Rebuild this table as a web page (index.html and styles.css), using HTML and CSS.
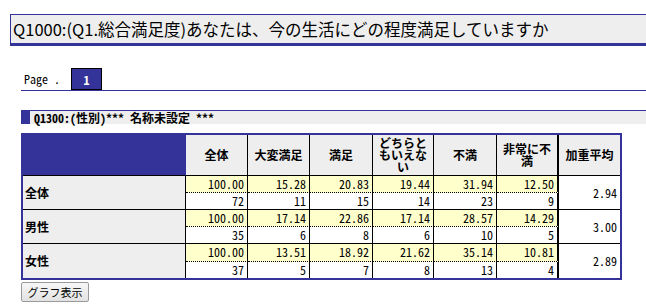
FILE: index.html
```html
<!DOCTYPE html>
<html lang="ja">
<head>
<meta charset="utf-8">
<title>Q1000</title>
<link rel="stylesheet" href="styles.css">
</head>
<body>
<div class="title">Q1000:(Q1.総合満足度)あなたは、今の生活にどの程度満足していますか</div>

<div class="pager">
  <span class="page-label">Page .</span>
  <span class="page-num">1</span>
</div>

<div class="sub">
  <span class="sub-mark"></span>
  <span class="sub-text">Q1300:(性別)*** 名称未設定 ***</span>
</div>

<table class="cross">
  <tr class="head">
    <th class="corner"></th>
    <th class="c1">全体</th>
    <th class="c2">大変満足</th>
    <th class="c3">満足</th>
    <th class="c4">どちらともいえない</th>
    <th class="c5">不満</th>
    <th class="c6 sep">非常に不満</th>
    <th class="c7 last">加重平均</th>
  </tr>
  <tr class="pct">
    <th class="label" rowspan="2">全体</th>
    <td>100.00</td><td>15.28</td><td>20.83</td><td>19.44</td><td>31.94</td><td class="sep">12.50</td>
    <td class="avg last" rowspan="2">2.94</td>
  </tr>
  <tr class="cnt">
    <td>72</td><td>11</td><td>15</td><td>14</td><td>23</td><td class="sep">9</td>
  </tr>
  <tr class="pct">
    <th class="label" rowspan="2">男性</th>
    <td>100.00</td><td>17.14</td><td>22.86</td><td>17.14</td><td>28.57</td><td class="sep">14.29</td>
    <td class="avg last" rowspan="2">3.00</td>
  </tr>
  <tr class="cnt">
    <td>35</td><td>6</td><td>8</td><td>6</td><td>10</td><td class="sep">5</td>
  </tr>
  <tr class="pct">
    <th class="label end" rowspan="2">女性</th>
    <td>100.00</td><td>13.51</td><td>18.92</td><td>21.62</td><td>35.14</td><td class="sep">10.81</td>
    <td class="avg last end" rowspan="2">2.89</td>
  </tr>
  <tr class="cnt end">
    <td>37</td><td>5</td><td>7</td><td>8</td><td>13</td><td class="sep">4</td>
  </tr>
</table>

<button class="graph-btn" type="button">グラフ表示</button>
</body>
</html>
```

FILE: styles.css
```css
html, body {
  margin: 0;
  padding: 0;
  background: #ffffff;
}
body {
  font-family: "Noto Sans Mono CJK JP", "Noto Sans CJK JP", monospace;
  font-size: 12px;
  color: #000;
}

.title {
  margin: 14px 0 0 10px;
  height: 28px;
  box-sizing: content-box;
  border-top: 1px solid #333399;
  border-left: 1px solid #333399;
  border-bottom: 3px solid #333399;
  background: #eeeeee;
  display: flex;
  align-items: center;
  padding-left: 2px;
  font-family: "Noto Sans CJK JP", sans-serif;
  font-size: 16.5px;
  line-height: 17px;
  white-space: nowrap;
}

.pager {
  margin: 22px 0 0 21px;
  border-bottom: 1px solid #333399;
  display: flex;
  align-items: center;
  height: 22px;
}
.page-label {
  padding-left: 3px;
  width: 47px;
  line-height: 12px;
}
.page-num {
  box-sizing: border-box;
  width: 31px;
  height: 22px;
  border: 1px solid #000;
  background: #333399;
  color: #fff;
  font-weight: bold;
  display: flex;
  align-items: center;
  justify-content: center;
}

.sub {
  margin: 19px 0 0 21px;
  border-top: 1px solid #333399;
  background: #eeeeee;
  height: 13px;
  display: flex;
  align-items: center;
}
.sub-mark {
  width: 9px;
  height: 13px;
  background: #333399;
}
.sub-text {
  margin-left: 4px;
  font-weight: bold;
  line-height: 13px;
  white-space: nowrap;
}

.cross {
  margin: 9px 0 0 21px;
  border: 2px solid #333399;
  border-collapse: separate;
  border-spacing: 0;
  table-layout: fixed;
  width: 601px;
}
.cross th,
.cross td {
  box-sizing: border-box;
  padding: 0 3px 0 2px;
  border-right: 1px solid #000;
  border-bottom: 1px solid #000;
  line-height: 12px;
  font-size: 12px;
}
.cross .last { border-right: none; }
.cross .sep { border-right: 2px solid #000; }

.head th {
  height: 41px;
  background: #eeeeee;
  font-weight: bold;
  text-align: center;
  vertical-align: middle;
  padding: 0 2px;
}
.head .corner {
  background: #333399;
  border-right: 1px solid #333399;
  border-bottom: 1px solid #000;
  width: 163px;
}
.head .c1 { width: 62px; }
.head .c2 { width: 62px; }
.head .c3 { width: 63px; }
.head .c4 { width: 61px; }
.head .c5 { width: 63px; }
.head .c6 { width: 62px; }
.head .c7 { width: 61px; }

.label {
  background: #eeeeee;
  text-align: left;
  font-weight: bold;
  vertical-align: middle;
  height: 34px;
}
.pct td {
  height: 17px;
  background: #ffffcc;
  text-align: right;
  border-bottom: 1px dotted #000;
}
.cnt td {
  height: 17px;
  background: #ffffff;
  text-align: right;
}
.cross .avg {
  background: #ffffff;
  text-align: right;
  vertical-align: middle;
  border-bottom: 1px solid #000;
}
.cross .end,
.cnt.end td {
  border-bottom: none;
}
.cnt.end td { height: 16px; }

.graph-btn {
  display: block;
  margin: 2px 0 0 21px;
  width: 68px;
  height: 20px;
  padding: 0;
  border: 1px solid #9a9a9a;
  border-radius: 2px;
  background: linear-gradient(#f7f7f7, #e2e2e2);
  font-family: "Noto Sans CJK JP", sans-serif;
  font-size: 11px;
  color: #000;
}
```
